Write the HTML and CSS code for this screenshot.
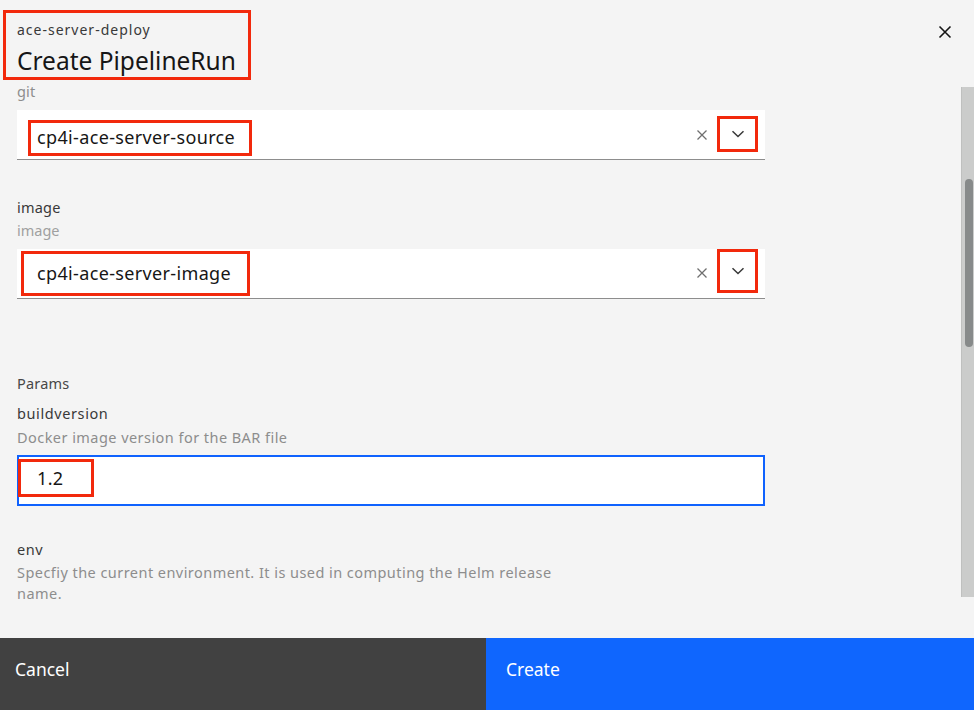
FILE: index.html
```html
<!DOCTYPE html>
<html lang="en">
<head>
<meta charset="utf-8">
<title>Create PipelineRun</title>
<link rel="stylesheet" href="styles.css">
</head>
<body>
<div class="modal">
  <header class="modal-header">
    <div class="title-box">
      <div class="subtitle">ace-server-deploy</div>
      <h1 class="title">Create PipelineRun</h1>
    </div>
    <button class="close" aria-label="Close">
      <svg width="14" height="14" viewBox="0 0 14 14"><path d="M1.5 1.5 L12.5 12.5 M12.5 1.5 L1.5 12.5" stroke="#161616" stroke-width="1.6" fill="none"/></svg>
    </button>
  </header>

  <div class="modal-body">
    <div class="scroll-content">
      <div class="label first">git</div>
      <div class="field field-git">
        <span class="value mark mark-git">cp4i-ace-server-source</span>
        <span class="spacer"></span>
        <span class="clear">
          <svg width="12" height="12" viewBox="0 0 12 12"><path d="M1.5 1.5 L10.5 10.5 M10.5 1.5 L1.5 10.5" stroke="#6f6f6f" stroke-width="1.3" fill="none"/></svg>
        </span>
        <span class="chev mark chev-git">
          <svg width="14" height="8" viewBox="0 0 14 8"><path d="M1.5 1.2 L7 6.5 L12.5 1.2" stroke="#393939" stroke-width="1.5" fill="none"/></svg>
        </span>
      </div>

      <div class="label gap-image">image</div>
      <div class="helper">image</div>
      <div class="field field-image">
        <span class="value mark mark-image">cp4i-ace-server-image</span>
        <span class="spacer"></span>
        <span class="clear">
          <svg width="12" height="12" viewBox="0 0 12 12"><path d="M1.5 1.5 L10.5 10.5 M10.5 1.5 L1.5 10.5" stroke="#6f6f6f" stroke-width="1.3" fill="none"/></svg>
        </span>
        <span class="chev mark chev-image">
          <svg width="14" height="8" viewBox="0 0 14 8"><path d="M1.5 1.2 L7 6.5 L12.5 1.2" stroke="#393939" stroke-width="1.5" fill="none"/></svg>
        </span>
      </div>

      <div class="section">Params</div>
      <div class="label gap-build">buildversion</div>
      <div class="helper spaced">Docker image version for the BAR file</div>
      <div class="field field-text">
        <span class="value mark mark-build">1.2</span>
      </div>

      <div class="label gap-env">env</div>
      <div class="helper spaced env-help">Specfiy the current environment. It is used in computing the Helm release name.</div>
    </div>
    <div class="scroll-track"><div class="scroll-thumb"></div></div>
  </div>

  <footer class="modal-footer">
    <button class="btn btn-secondary">Cancel</button>
    <button class="btn btn-primary">Create</button>
  </footer>
</div>
</body>
</html>
```

FILE: styles.css
```css
* { box-sizing: border-box; }
html, body { margin: 0; padding: 0; }
body {
  background: #f4f4f4;
  font-family: "Noto Sans", "Liberation Sans", sans-serif;
  color: #161616;
}
.modal {
  width: 974px;
  height: 710px;
  display: flex;
  flex-direction: column;
  overflow: hidden;
}
.modal-header {
  height: 82px;
  flex: none;
  display: flex;
  justify-content: space-between;
  align-items: flex-start;
  padding: 10px 0 0 3px;
}
.title-box {
  border: 3px solid #f2290c;
  padding: 8px 0 0 11px;
  width: 248px;
  height: 70px;
}
.subtitle {
  font-size: 14px;
  line-height: 18px;
  color: #393939;
  letter-spacing: 1px;
}
.title {
  margin: 6px 0 0 0;
  font-size: 24.5px;
  line-height: 32px;
  font-weight: 400;
  color: #161616;
  white-space: nowrap;
}
.close {
  margin: 14px 21px 0 0;
  width: 16px;
  height: 16px;
  padding: 0;
  border: 0;
  background: none;
  display: flex;
  align-items: center;
  justify-content: center;
}
.modal-body {
  flex: 1;
  display: flex;
  min-height: 0;
}
.scroll-content {
  flex: 1;
  overflow: hidden;
  padding-left: 17px;
}
.scroll-track {
  flex: none;
  width: 13px;
  height: 510px;
  margin-top: 5px;
  background: #cbcccb;
  border-left: 1px solid #bfc0bf;
  padding: 92px 0 0 3px;
}
.scroll-thumb {
  width: 8px;
  height: 168px;
  border-radius: 4px;
  background: #878a8a;
}
.label {
  font-size: 14.5px;
  line-height: 20px;
  color: #393939;
  letter-spacing: 0.2px;
}
.label.first { line-height: 18px; margin-bottom: 10px; color: #8d8d8d; }
.helper {
  font-size: 14.5px;
  line-height: 20px;
  color: #a0a0a0;
  margin-top: 3px;
  margin-bottom: 9px;
}
.spaced { letter-spacing: 0.45px; color: #8d8d8d; }
.gap-image { margin-top: 37px; }
.section {
  margin-top: 74px;
  font-size: 14.5px;
  line-height: 20px;
  color: #474747;
  letter-spacing: 0.2px;
}
.gap-build { margin-top: 10px; letter-spacing: 0.6px; }
.gap-build + .helper { margin-top: 4px; margin-bottom: 8px; }
.gap-env { margin-top: 33px; letter-spacing: 0.6px; }
.env-help { max-width: 556px; line-height: 21px; margin-bottom: 0; }

.field {
  width: 748px;
  background: #fff;
  display: flex;
  align-items: flex-start;
}
.field-git, .field-image {
  height: 50px;
  border-bottom: 1px solid #8d8d8d;
}
.field-git { padding: 10px 7px 0 11px; }
.field-image { padding: 2px 7px 0 4px; }
.field-text {
  height: 51px;
  border: 2px solid #0f62fe;
  padding: 2px 0 0 0;
}
.mark { border: 3px solid #f2290c; }
.value {
  font-size: 18px;
  letter-spacing: 0.35px;
  color: #161616;
  white-space: nowrap;
}
.mark-git { line-height: 28px; padding: 0 14px 2px 6px; }
.mark-image { line-height: 39px; padding: 0 16px 0 13px; }
.mark-build { line-height: 32px; width: 76px; padding-left: 16px; margin-left: -1px; }
.spacer { flex: 1; }
.clear {
  width: 12px;
  height: 12px;
  display: flex;
  margin-right: 9px;
}
.field-git .clear { margin-top: 9px; }
.field-image .clear { margin-top: 16px; }
.chev {
  width: 41px;
  display: flex;
  align-items: center;
  justify-content: center;
}
.chev-git { height: 36px; margin-top: -4px; }
.chev-image { height: 44px; margin-top: -2px; }

.modal-footer {
  flex: none;
  height: 72px;
  display: flex;
}
.btn {
  border: 0;
  margin: 0;
  font-family: inherit;
  font-size: 17.5px;
  line-height: 22px;
  color: #fff;
  text-align: left;
  padding: 20px 0 0 15px;
  display: flex;
  align-items: flex-start;
}
.btn-secondary { width: 486px; background: #414141; }
.btn-primary { flex: 1; background: #0f66fe; padding-left: 20px; }
```
